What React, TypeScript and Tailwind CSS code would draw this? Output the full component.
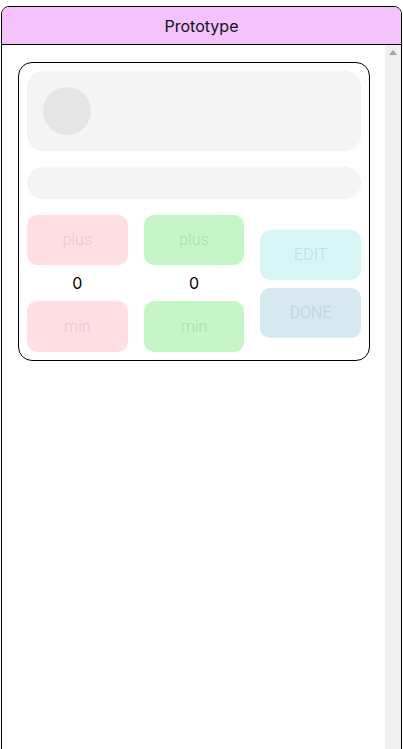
import React from "react";

export default function App() {
  const btn = "rounded-[10px] flex items-center justify-center text-[16px] font-light";
  return (
    <div className="h-[749px] pt-[6px] pl-[1px] bg-white overflow-hidden" style={{ fontFamily: "Roboto, 'Noto Sans', sans-serif" }}>
      <div className="w-[401px] h-[800px] border border-black rounded-t-[8px] flex flex-col overflow-hidden">
        <div className="h-[38px] shrink-0 bg-[#f4c2fc] border-b border-black flex items-center justify-center">
          <span className="text-[16px] text-[#111122]" style={{ fontFamily: "Inter, 'Noto Sans', sans-serif" }}>Prototype</span>
        </div>
        <div className="flex-1 flex">
          <div className="flex-1 pt-[17px] pl-[16px]">
            <div className="w-[352px] border border-black rounded-[14px] p-2 flex flex-col gap-4">
              <div className="h-[80px] rounded-[16px] bg-[#f4f4f4] flex items-center px-4">
                <div className="w-[48px] h-[48px] rounded-full bg-[#e5e5e5]" />
              </div>
              <div className="h-[32px] rounded-full bg-[#f4f4f4]" />
              <div className="grid grid-cols-3 gap-4 items-center">
                <div className="flex flex-col">
                  <div className={`${btn} h-[50px] bg-[#ffdfe4] text-[#ecc6cd]`}>plus</div>
                  <div className="h-[36px] flex items-center justify-center text-[16px] text-black" style={{ fontFamily: "Inter, sans-serif" }}>0</div>
                  <div className={`${btn} h-[51px] bg-[#ffdfe4] text-[#ecc6cd]`}>min</div>
                </div>
                <div className="flex flex-col">
                  <div className={`${btn} h-[50px] bg-[#c6f6c8] text-[#addcb0]`}>plus</div>
                  <div className="h-[36px] flex items-center justify-center text-[16px] text-black" style={{ fontFamily: "Inter, sans-serif" }}>0</div>
                  <div className={`${btn} h-[51px] bg-[#c6f6c8] text-[#addcb0]`}>min</div>
                </div>
                <div className="flex flex-col gap-2">
                  <div className={`${btn} h-[50px] bg-[#d6f6f5] text-[#bcdedf]`}>EDIT</div>
                  <div className={`${btn} h-[50px] bg-[#d6e9f0] text-[#bcd2db]`}>DONE</div>
                </div>
              </div>
            </div>
          </div>
          <div className="w-[16px] bg-[#f0f0f0] flex justify-center pt-[5px]">
            <svg width="8" height="5" viewBox="0 0 8 5">
              <polygon points="4,0 8,5 0,5" fill="#a3a3a3" />
            </svg>
          </div>
        </div>
      </div>
    </div>
  );
}
